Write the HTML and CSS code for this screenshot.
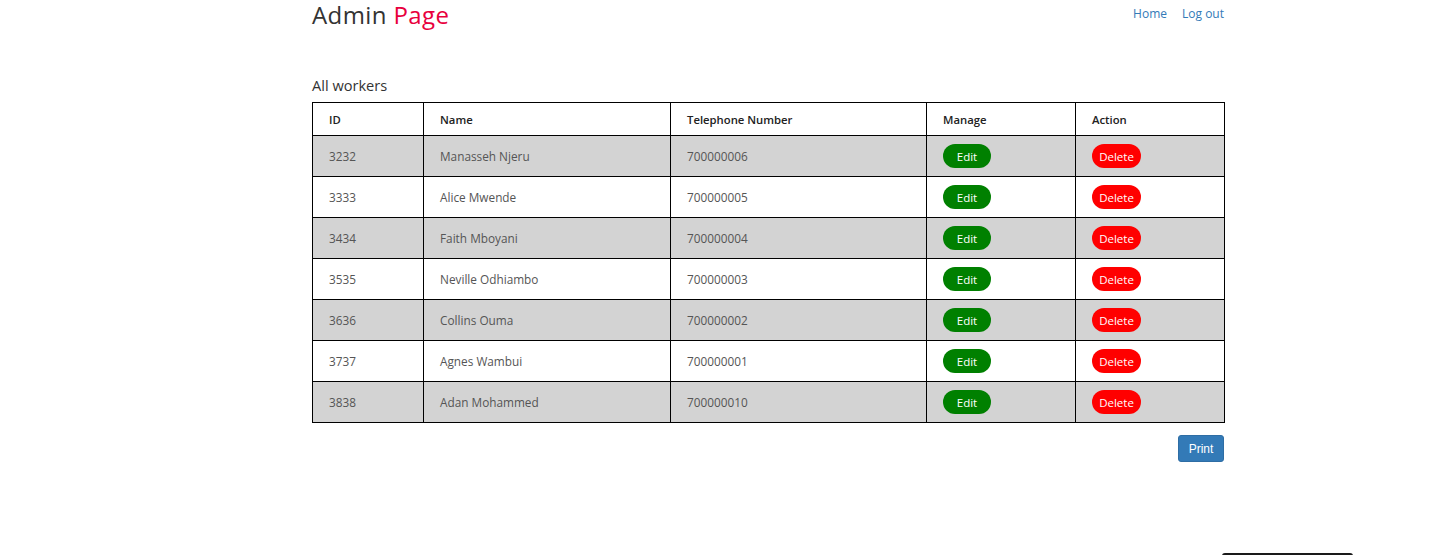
FILE: index.html
```html
<!DOCTYPE html>
<html>
<head>
<meta charset="utf-8">
<title>Admin Page</title>
<link rel="stylesheet" href="styles.css">
</head>
<body>
<div class="container">
  <header class="topbar">
    <h1 class="brand">Admin <span class="accent">Page</span></h1>
    <nav class="nav">
      <a href="#">Home</a>
      <a href="#">Log out</a>
    </nav>
  </header>
  <h2 class="section-title">All workers</h2>
  <table class="workers">
    <colgroup>
      <col class="c-id"><col class="c-name"><col class="c-tel"><col class="c-man"><col class="c-act">
    </colgroup>
    <thead>
      <tr><th>ID</th><th>Name</th><th>Telephone Number</th><th>Manage</th><th>Action</th></tr>
    </thead>
    <tbody>
      <tr class="shade"><td>3232</td><td>Manasseh Njeru</td><td>700000006</td><td><button class="btn-edit">Edit</button></td><td><button class="btn-del">Delete</button></td></tr>
      <tr><td>3333</td><td>Alice Mwende</td><td>700000005</td><td><button class="btn-edit">Edit</button></td><td><button class="btn-del">Delete</button></td></tr>
      <tr class="shade"><td>3434</td><td>Faith Mboyani</td><td>700000004</td><td><button class="btn-edit">Edit</button></td><td><button class="btn-del">Delete</button></td></tr>
      <tr><td>3535</td><td>Neville Odhiambo</td><td>700000003</td><td><button class="btn-edit">Edit</button></td><td><button class="btn-del">Delete</button></td></tr>
      <tr class="shade"><td>3636</td><td>Collins Ouma</td><td>700000002</td><td><button class="btn-edit">Edit</button></td><td><button class="btn-del">Delete</button></td></tr>
      <tr><td>3737</td><td>Agnes Wambui</td><td>700000001</td><td><button class="btn-edit">Edit</button></td><td><button class="btn-del">Delete</button></td></tr>
      <tr class="shade"><td>3838</td><td>Adan Mohammed</td><td>700000010</td><td><button class="btn-edit">Edit</button></td><td><button class="btn-del">Delete</button></td></tr>
    </tbody>
  </table>
  <div class="actions">
    <button class="btn-print">Print</button>
  </div>
</div>
<div class="peek"></div>
</body>
</html>
```

FILE: styles.css
```css
html, body {
  margin: 0;
  padding: 0;
  background: #fff;
}
body {
  font-family: "Open Sans", "DejaVu Sans", sans-serif;
  color: #333;
  overflow: hidden;
  height: 555px;
}
.container {
  width: 912px;
  margin-left: 312px;
}
.topbar {
  display: flex;
  justify-content: space-between;
  align-items: flex-start;
  height: 76px;
}
.brand {
  margin: 0;
  font-weight: 400;
  font-size: 24px;
  line-height: 30px;
  letter-spacing: 0.4px;
  color: #333;
}
.accent { color: #e8003d; }
.nav {
  display: flex;
  gap: 15px;
  padding-top: 6px;
}
.nav a {
  color: #337ab7;
  text-decoration: none;
  font-size: 12px;
  line-height: 16px;
  font-weight: 500;
}
.section-title {
  margin: 0 0 8px;
  font-weight: 400;
  font-size: 14.6px;
  line-height: 18px;
  color: #333;
}
.workers {
  width: 912px;
  border-collapse: collapse;
  table-layout: fixed;
  border: 1px solid #000;
}
.c-id { width: 111px; }
.c-name { width: 247px; }
.c-tel { width: 256px; }
.c-man { width: 149px; }
.c-act { width: 149px; }
.workers th, .workers td {
  border: 1px solid #000;
  text-align: left;
  padding: 0 16px;
  white-space: nowrap;
}
.workers th {
  height: 32px;
  font-size: 11.3px;
  font-weight: 600;
  color: #222;
}
.workers td {
  height: 40px;
  font-size: 11.8px;
  color: #555;
}
.shade td { background: #d3d3d3; }
.btn-edit, .btn-del {
  border: 0;
  border-radius: 12px;
  height: 24px;
  padding: 0;
  color: #fff;
  font-family: inherit;
  font-size: 11.5px;
  font-weight: 500;
  display: block;
}
.btn-edit { background: #008000; width: 48px; }
.btn-del { background: #ff0000; width: 49px; }
.actions {
  display: flex;
  justify-content: flex-end;
  padding-top: 12px;
}
.btn-print {
  background: #337ab7;
  border: 1px solid #2e6da4;
  border-radius: 3px;
  color: #fff;
  font-family: "Liberation Sans", Arial, sans-serif;
  font-size: 12px;
  width: 46px;
  height: 27px;
  padding: 0;
}
.peek {
  position: fixed;
  left: 1222px;
  top: 553px;
  width: 131px;
  height: 10px;
  background: #1a1a1a;
  border-radius: 3px;
}
```
